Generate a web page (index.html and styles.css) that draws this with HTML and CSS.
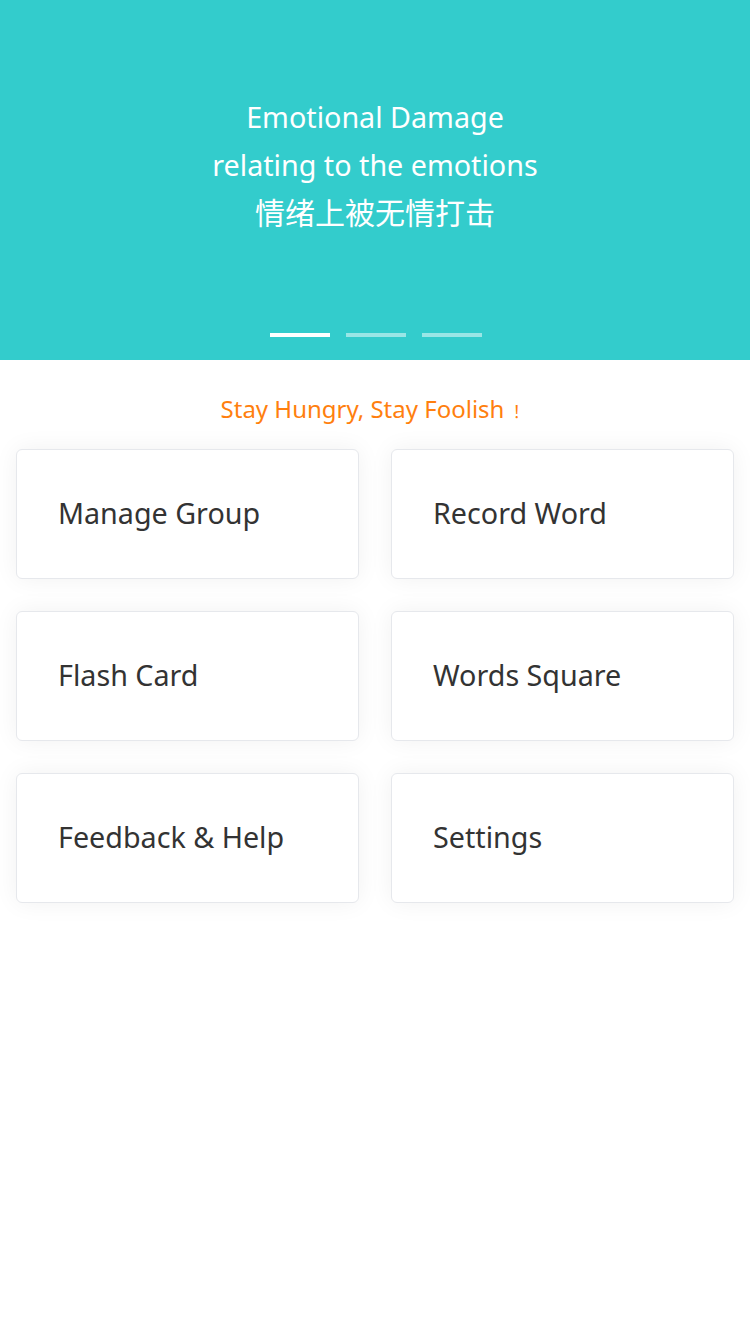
FILE: index.html
```html
<!DOCTYPE html>
<html lang="en">
<head>
<meta charset="utf-8">
<title>Home</title>
<link rel="stylesheet" href="styles.css">
</head>
<body>
<div class="page">
  <section class="banner">
    <div class="slide">
      <p>Emotional Damage</p>
      <p>relating to the emotions</p>
      <p class="zh">情绪上被无情打击</p>
    </div>
    <div class="dots">
      <span class="dot active"></span>
      <span class="dot"></span>
      <span class="dot"></span>
    </div>
  </section>
  <p class="motto">Stay Hungry, Stay Foolish<span class="bang">！</span></p>
  <div class="grid">
    <div class="card">Manage Group</div>
    <div class="card">Record Word</div>
    <div class="card">Flash Card</div>
    <div class="card">Words Square</div>
    <div class="card">Feedback &amp; Help</div>
    <div class="card">Settings</div>
  </div>
</div>
</body>
</html>
```
FILE: styles.css
```css
* { box-sizing: border-box; }
html, body { margin: 0; padding: 0; background: #fff; }
body {
  font-family: "Noto Sans", "Noto Sans CJK SC", sans-serif;
  width: 750px;
  height: 1334px;
}
.banner {
  height: 360px;
  background: #33cccc;
  display: flex;
  flex-direction: column;
  align-items: center;
}
.slide {
  padding-top: 93px;
  color: #fff;
  font-size: 28.7px;
  line-height: 48px;
  text-align: center;
  height: 333px;
}
.slide p { margin: 0; }
.slide .zh {
  font-family: "Noto Sans CJK SC", sans-serif;
  font-size: 30px;
  line-height: 44px;
}
.dots {
  display: flex;
  gap: 16px;
  margin-left: 2px;
}
.dot {
  width: 60px;
  height: 4px;
  background: rgba(255,255,255,0.5);
}
.dot.active { background: #fff; }
.motto {
  margin: 0;
  padding-top: 35px;
  height: 89px;
  text-align: center;
  color: #ff7f0e;
  font-size: 24px;
  line-height: 28px;
}
.bang {
  font-family: "Noto Sans CJK SC", sans-serif;
  font-size: 17px;
  margin-left: 8px;
}
.grid {
  display: grid;
  grid-template-columns: 1fr 1fr;
  gap: 32px;
  padding: 0 16px;
}
.card {
  height: 130px;
  border: 1px solid #e6e8ec;
  border-radius: 6px;
  background: #fff;
  box-shadow: 0 0 24px rgba(0,0,0,0.06);
  display: flex;
  align-items: center;
  padding: 0 0 3px 41px;
  font-size: 28.7px;
  color: #333;
}
```
